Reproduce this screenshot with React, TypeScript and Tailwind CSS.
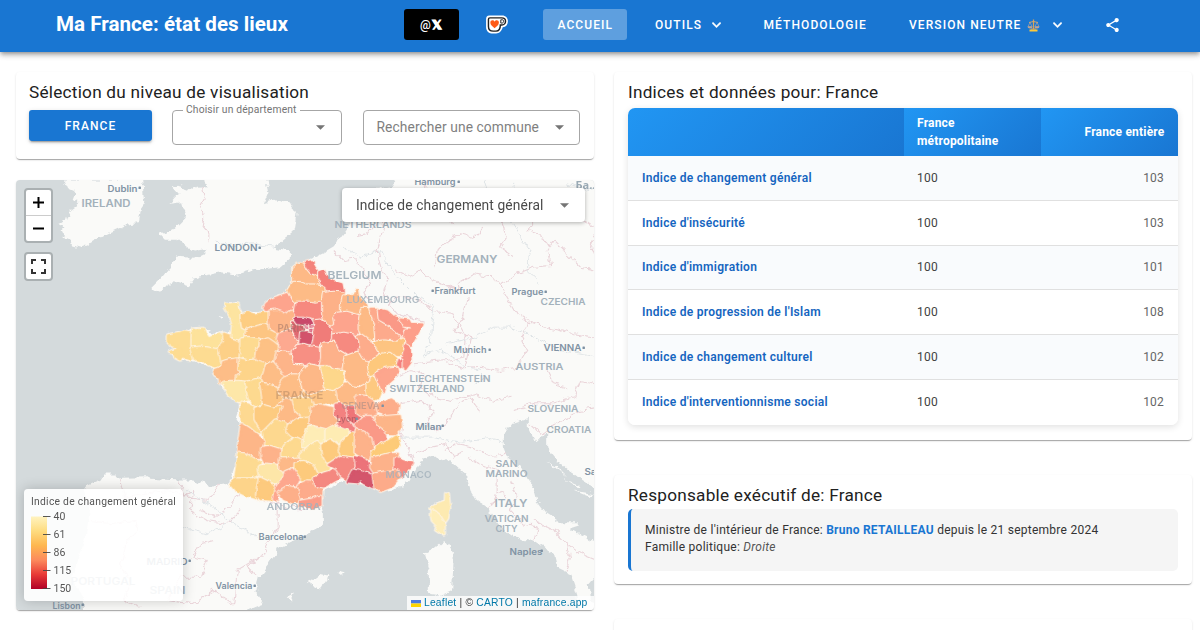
import React from "react";

type Shape = [string, string];

const NW: Shape[] = [
  ["#fddc92", "22,240 40,236 60,232 72,228 92,232 97,245 95,262 98,276 90,282 93,298 100,308 85,310 65,302 58,312 45,305 42,293 28,290 45,283 60,280 50,272 35,270 30,262 22,258"],
  ["#fde29b", "97,222 128,220 132,232 145,250 165,240 188,236 194,250 192,262 180,268 178,280 165,283 140,278 120,276 105,282 96,272"],
  ["#fddc92", "93,280 120,277 140,279 165,284 182,283 184,300 184,325 180,340 160,332 145,325 130,318 112,315 100,308"],
  ["#fdd087", "190,235 205,240 218,240 240,246 242,275 240,300 232,312 215,312 195,315 186,322 182,300 178,285 182,268 194,262"],
  ["#fde4a0", "196,144 208,148 222,144 232,144 232,158 240,172 245,190 243,200 258,212 256,225 262,235 250,248 230,248 215,243 216,225 218,205 212,185 203,168 197,158"],
  ["#fdcd82", "243,178 262,172 282,178 305,174 326,168 330,190 328,208 310,212 285,215 262,222 248,215 244,195"],
  ["#fdc582", "262,222 285,216 310,210 325,215 330,225 345,230 352,240 362,262 352,272 340,262 322,252 300,258 290,250 265,247 258,240"],
  ["#fdda90", "243,252 265,248 290,252 302,255 298,270 290,280 290,300 285,315 262,318 240,310 242,290"],
  ["#fdc185", "302,258 322,252 340,264 352,274 350,295 345,310 330,320 318,328 300,320 285,315 288,300 290,283 300,270"],
  ["#fda48d", "312,156 318,145 335,132 360,122 385,114 402,108 410,125 408,150 404,168 385,172 372,180 355,170 335,165 315,163"],
  ["#fdb588", "328,168 345,166 360,172 374,180 388,170 405,168 402,185 397,198 392,212 380,225 365,232 355,235 345,225 332,218 328,200"],
  ["#fda990", "357,236 375,230 390,226 398,240 412,252 422,265 415,285 395,295 375,292 358,284 360,268 352,250"],
  ["#fdbd87", "160,345 185,335 188,320 205,315 232,312 240,325 235,345 250,352 232,365 230,380 215,388 195,390 180,380 178,365 165,358"],
  ["#fdd48a", "238,312 262,318 285,316 310,325 318,332 312,355 300,375 275,378 245,385 230,380 232,365 248,352 237,340"],
  ["#fdbd86", "318,332 345,320 360,330 370,345 372,365 368,385 350,400 330,392 305,388 302,372 312,355"],
  ["#fdb489", "352,290 375,292 390,300 395,315 405,332 432,332 440,350 425,362 400,365 380,365 370,352 360,335 345,318"],
];

const NE: Shape[] = [
  ["#fdb986", "8,38 20,28 42,22 50,40 62,52 78,58 88,75 98,92 90,95 70,90 40,88 25,82 8,90"],
  ["#f4847b", "43,22 65,17 70,32 80,48 78,54 62,50 52,38"],
  ["#f4807a", "86,50 100,45 106,62 120,76 153,86 157,106 130,108 105,108 98,92 87,70"],
  ["#fdbb86", "-6,105 0,95 10,82 30,83 45,90 70,90 90,95 98,95 100,115 98,140 75,145 50,140 25,142 8,132"],
  ["#f6897f", "18,142 50,142 75,145 97,140 97,160 92,175 97,195 75,193 50,190 22,188 14,165"],
  ["#fdb188", "100,115 130,112 160,115 160,130 152,155 150,175 135,180 130,200 118,215 105,195 98,170 98,140"],
  ["#fdb887", "160,122 180,124 192,120 200,104 203,125 228,150 225,160 215,160 205,182 175,178 155,170 155,145"],
  ["#fda48d", "140,175 170,172 205,182 207,200 208,225 195,240 160,235 140,245 120,238 118,220 135,205 132,188"],
  ["#fdba85", "210,185 215,160 240,162 250,185 255,215 255,245 235,255 215,240 208,220 208,200"],
  ["#fdaa8c", "240,160 262,160 265,190 280,195 300,205 322,225 338,250 320,262 280,260 258,258 257,235 255,210 248,185"],
  ["#fa9987", "265,162 290,168 310,185 330,190 335,205 325,212 345,220 342,245 330,235 310,218 285,200 268,190"],
  ["#fd9f8a", "330,192 355,195 360,205 396,207 380,235 365,260 358,278 342,268 340,245 345,225 362,225 365,212 340,210"],
  ["#f99083", "340,268 358,280 360,320 345,340 332,330 332,312 335,290"],
  ["#f4807e", "318,312 330,315 330,335 318,328"],
  ["#fdc481", "250,262 280,258 320,262 338,252 335,280 330,298 300,298 275,295 255,280"],
  ["#fdac8b", "200,245 215,240 235,255 245,270 260,295 250,320 235,325 215,315 205,300 195,280"],
  ["#f68a80", "125,240 160,235 185,240 200,262 198,285 175,298 150,298 130,285 118,262"],
  ["#f07c79", "66,198 90,195 105,205 118,225 118,248 105,262 85,265 80,280 65,278 62,250 65,220"],
  ["#e06871", "5,200 20,203 35,210 38,225 30,250 20,245 10,225"],
  ["#d2536c", "32,232 50,230 65,234 60,262 45,266 30,262"],
  ["#c94a6b", "12,190 40,190 60,195 65,204 45,205 20,202"],
  ["#f78f83", "10,290 20,272 40,268 60,275 85,280 98,290 90,310 85,335 65,332 45,325 12,318 8,300"],
  ["#fdb18a", "95,265 130,262 140,285 165,300 165,320 155,350 130,345 110,335 90,332 95,310"],
  ["#fdba86", "165,305 200,292 210,310 235,325 240,345 232,375 205,388 185,385 165,365 160,340"],
  ["#fdc87c", "235,325 255,310 270,298 300,295 318,310 312,330 290,338 260,350 240,358"],
  ["#fda68d", "255,355 285,340 320,337 323,350 308,370 285,390 280,410 268,385"],
  ["#fdd78b", "88,335 110,335 130,345 158,350 155,385 130,400 100,395 95,370"],
  ["#fdb887", "40,340 60,330 85,335 92,370 97,397 75,408 55,412 40,400 30,365"],
];

const INNER_PARIS: Shape[] = [
  ["#e5889c", "43,209 53,210 51,220 43,219"],
  ["#e27f95", "56,209 67,209 67,217 57,217"],
  ["#d96b84", "53,221 66,220 65,230 54,228"],
];

const SW: Shape[] = [
  ["#fde7a8", "7,22 25,20 55,20 75,22 82,40 88,70 60,78 45,73 24,55"],
  ["#fdd98f", "78,22 118,12 122,20 125,50 130,90 115,95 98,92 88,70 82,45"],
  ["#fdc481", "122,25 140,28 150,32 175,45 195,70 180,95 155,100 130,92 128,60"],
  ["#fdbd86", "178,32 190,10 215,0 240,0 248,20 245,50 245,70 215,72 195,68 178,50"],
  ["#fdc486", "250,45 275,50 305,40 350,44 358,75 345,85 320,78 300,88 275,95 268,72 248,68"],
  ["#fdd088", "212,72 245,68 270,72 280,95 270,120 250,132 225,125 210,105"],
  ["#fdba86", "175,90 195,72 210,75 218,110 235,125 225,145 205,150 185,135 170,130"],
  ["#fdd991", "62,82 85,88 105,100 108,130 110,150 125,170 110,170 90,153 64,138 62,110"],
  ["#fdcb80", "105,100 130,92 155,100 180,95 165,125 155,155 130,168 115,150 105,130"],
  ["#fdd88f", "130,170 165,135 185,140 205,155 210,185 190,220 160,218 135,205"],
  ["#fdca7e", "205,150 230,132 262,130 275,150 265,175 245,190 215,180 200,165"],
  ["#fdb889", "275,95 300,90 345,100 350,130 340,160 310,160 290,150 270,140"],
  ["#fdb688", "64,147 85,160 110,180 128,195 125,225 115,250 100,250 75,235 54,230 57,190"],
  ["#fdb28a", "125,218 150,215 182,225 182,245 165,268 135,265 125,245"],
  ["#fdd98f", "185,230 200,205 225,188 250,200 248,225 235,250 205,252 185,245"],
  ["#feedb6", "255,180 265,155 290,158 318,165 318,205 300,200 285,200 270,215 250,212"],
  ["#fde09b", "240,240 265,215 290,200 305,220 325,250 322,280 300,295 280,285 255,262 240,260"],
  ["#feecb3", "318,165 340,153 365,155 385,165 360,200 335,205 318,200"],
  ["#fdca7d", "305,210 330,195 350,210 360,240 340,260 320,258 308,235"],
  ["#fdda91", "54,235 75,238 100,252 120,260 118,300 90,310 44,312 50,270"],
  ["#fde6a8", "115,275 135,268 165,270 180,285 192,300 180,320 155,320 130,315 118,300"],
  ["#fdb988", "178,252 205,252 235,250 230,265 210,275 195,290 180,278"],
  ["#fdca7c", "225,265 250,260 275,270 290,300 272,315 245,315 225,295"],
  ["#fda78e", "195,290 215,282 235,310 225,332 195,345 175,345 170,372 157,368 160,345 175,325 190,310"],
  ["#fdd48a", "30,325 44,312 90,312 118,308 120,340 108,368 75,358 45,343"],
  ["#fdca7e", "118,310 135,318 160,330 155,345 150,372 120,370 110,358"],
  ["#fdaf89", "175,350 200,335 230,340 245,362 240,378 215,380 190,370"],
  ["#fdab8b", "235,330 260,318 300,322 306,345 303,368 270,370 245,370 240,350"],
  ["#fb9d89", "240,379 270,374 300,364 300,388 275,397 250,388 237,393"],
  ["#f48880", "280,310 300,298 325,290 345,278 370,290 355,308 310,333 285,328"],
];

const SE: Shape[] = [
  ["#fdca7d", "65,200 100,165 108,190 105,230 95,250 65,240 58,225"],
  ["#f38180", "45,88 78,85 80,115 105,140 100,165 75,155 55,150 60,130 45,115"],
  ["#ee7478", "80,90 100,85 110,115 125,130 105,145 85,130"],
  ["#fdba86", "50,40 75,22 110,10 140,22 138,55 115,60 110,85 80,85 58,75"],
  ["#fdc980", "140,0 170,5 185,40 175,65 150,80 142,50"],
  ["#fdae8b", "110,62 135,65 160,80 172,95 165,120 130,125 110,110"],
  ["#fdad8a", "170,88 213,72 233,87 230,115 205,120 175,110"],
  ["#fdb588", "165,125 200,125 238,122 241,155 223,176 190,175 170,150"],
  ["#fa9987", "105,150 130,125 150,125 165,150 190,170 198,200 165,210 150,185 125,165"],
  ["#fdb28a", "108,165 130,172 150,190 155,220 145,250 120,240 105,230"],
  ["#fdcb78", "155,235 170,215 200,200 230,182 236,210 200,235 170,250 155,248"],
  ["#f48880", "25,268 60,245 100,250 108,280 80,312 62,300 50,280"],
  ["#ec737a", "105,245 130,252 150,270 158,298 135,292 110,280"],
  ["#d4566c", "82,318 100,282 130,290 160,305 160,336 130,323 122,312 112,320"],
  ["#fdb28a", "155,250 200,238 232,235 225,262 230,285 200,285 165,295 152,275"],
  ["#f68b81", "225,250 250,258 276,264 260,285 240,306 225,290"],
  ["#fdab8a", "160,298 200,290 230,288 236,305 213,333 180,346 164,336"],
  ["#fdeab1", "332,400 350,387 376,378 377,354 382,354 386,395 380,428 370,442 355,420 337,408"],
  ["#feeeba", "337,405 355,420 370,445 370,477 347,463 352,450 337,435 334,420"],
];

const LAND = [
  "190,27 200,50 225,62 215,90 240,95 205,125 210,135 175,160 195,170 180,185 200,195 185,205 210,210 215,225 240,232 265,222 320,190 380,162 412,158 418,120 432,100 425,27",
  "610,0 620,50 590,52 570,58 530,45 515,48 535,70 510,100 545,95 555,130 545,150 515,180 478,192 490,205 530,205 560,230 590,240 620,235 605,255 575,262 525,258 515,285 480,325 450,355 475,368 495,345 520,332 565,348 585,320 660,305 710,312 750,300 840,290 868,265 868,240 820,232 880,180 888,130 870,100 820,88 790,98 805,60 790,0",
  "1200,0 1180,45 1130,55 1100,100 1070,130 1045,165 1020,200 1000,230 975,245 940,262 880,285 878,335 865,365 800,395 790,418 805,425 727,430 715,410 712,398 675,398 685,430 695,455 700,480 670,495 610,478 575,480 505,500 505,520 530,530 510,545 530,565 580,570 660,600 640,610 665,650 720,700 705,745 720,760 710,860 690,935 640,945 580,930 530,930 450,925 440,920 370,922 350,925 345,912 310,912 300,928 260,945 250,960 270,1010 255,1100 215,1230 250,1280 250,1350 720,1350 740,1320 790,1300 765,1260 775,1220 830,1150 830,1135 880,1110 905,1100 970,1065 970,1020 960,990 965,960 1030,930 1070,940 1120,950 1150,962 1210,950 1240,910 1260,870 1300,855 1360,880 1395,910 1410,960 1425,985 1460,1010 1480,1040 1520,1090 1560,1105 1605,1115 1660,1150 1670,1190 1710,1210 1730,1270 1745,1350 1800,1350 1800,1300 1768,1290 1765,1240 1800,1200 1800,1120 1735,1090 1705,1075 1735,1065 1735,1055 1680,1055 1640,1030 1610,990 1600,950 1570,910 1560,890 1520,860 1510,830 1510,790 1520,765 1550,755 1585,745 1585,775 1605,815 1640,780 1640,830 1680,880 1730,920 1800,965 1800,0",
  "1270,1150 1300,1135 1330,1110 1360,1150 1355,1260 1320,1275 1285,1270 1285,1200",
  "925,1235 960,1210 985,1215 960,1255",
  "1010,1202 1035,1208 1030,1218",
  "862,1280 880,1272 872,1290",
  "652,437 668,440 660,444",
  "1640,870 1670,890 1700,920 1680,905",
  "1690,925 1740,945 1730,950",
  "1720,960 1780,972 1770,980",
];

const BORDERS = [
  "605,50 612,80 600,105 610,140 605,165 628,190 628,215",
  "1000,240 1030,270 1070,265 1090,300 1110,340 1090,370 1115,400",
  "1070,195 1100,190 1120,165 1155,140 1150,100 1180,80 1170,55",
  "1155,145 1145,190 1130,240 1140,290 1165,330 1150,360 1165,400 1190,430 1270,455",
  "1165,400 1190,380 1250,385 1300,420 1360,430 1395,490 1390,560 1340,570 1280,575 1240,580",
  "1190,300 1230,320 1260,300 1300,330 1340,345 1375,360 1370,340 1420,310 1480,320 1500,345",
  "1300,290 1310,240 1340,210 1380,190 1420,200 1450,170",
  "1500,345 1550,310 1600,290 1650,285 1640,240 1660,210 1700,250 1740,290 1790,300",
  "1500,345 1520,380 1550,430 1590,455 1650,475 1720,490 1790,500",
  "1400,380 1390,440 1360,480 1410,500 1400,560 1390,590",
  "1590,455 1560,500 1580,540 1550,590 1500,600 1440,590 1390,595 1340,580",
  "1590,100 1600,150 1580,180 1630,200 1650,230",
  "1500,150 1520,200 1500,230 1540,260",
  "1700,80 1720,130 1790,180 1770,230 1790,260",
  "1280,27 1270,60 1300,90 1340,100 1330,140 1360,160",
  "1150,600 1190,620 1230,600 1270,610 1260,650 1300,680 1350,690 1420,670 1480,690 1530,680",
  "1195,740 1210,760 1200,800 1230,850 1240,880",
  "1200,700 1260,690 1300,720 1280,760 1310,780 1340,760 1370,700 1410,680 1440,720",
  "1330,840 1370,820 1420,830 1480,860 1520,850",
  "1250,850 1290,830 1340,820 1360,860 1390,840",
  "1400,860 1440,880 1490,900 1490,960 1520,980",
  "1490,960 1480,1000 1460,1010",
  "1530,930 1550,980 1530,1020 1570,1060 1610,1070 1600,1110",
  "1600,1050 1660,1080 1700,1120 1710,1160 1700,1200",
  "1700,1120 1740,1150 1790,1170",
  "1540,720 1600,700 1660,700 1720,680 1740,630 1790,640",
  "1590,760 1620,790 1680,750 1740,720 1790,710",
  "1640,600 1660,640 1700,650",
  "360,925 375,980 420,970 500,960 560,970 580,960",
  "530,930 560,980 620,990 660,940",
  "580,960 570,1020 620,1050 680,1060 720,1020",
  "700,950 760,980 830,1000 900,1020 960,1000",
  "720,960 690,1010 640,1040 600,1020",
  "830,1010 830,1070 780,1160 740,1190 770,1215",
  "640,1110 600,1120 580,1160 620,1170 600,1220 540,1220",
  "540,1220 500,1290 580,1300 640,1260 700,1300 710,1200 780,1160",
  "380,1110 360,1180 390,1240 370,1290 420,1310",
  "270,1050 330,1060 400,1050 420,1080 380,1110",
];

const RIVERS = [
  "1025,230 1080,260 1140,240 1160,280 1200,330 1240,370 1300,410 1290,500 1270,560",
  "1270,550 1320,540 1360,560 1390,590",
  "1340,520 1420,500 1480,470 1540,470 1600,500 1680,540 1790,560",
  "1450,27 1470,90 1530,150 1590,240 1580,300 1620,340",
  "1180,90 1240,80 1320,70 1370,60",
  "1200,800 1290,800 1380,815 1460,805 1510,815",
  "1400,590 1440,600 1460,620 1420,640",
  "560,960 640,1010 700,1060 770,1100",
  "540,1070 620,1090 680,1060",
  "650,215 700,225 760,220 820,230",
  "1700,40 1750,60 1790,50",
  "1530,80 1540,40",
];

type LabelProps = { x: number; y: number; w: number; s?: number; c?: string; t: string; o?: number };
const COUNTRY = "#a3b1bb";
const CITY = "#8193a4";

const LABELS: LabelProps[] = [
  { x: 107, y: 191, w: 30, s: 9, c: CITY, t: "Dublin" },
  { x: 81, y: 206, w: 49, s: 10, t: "IRELAND" },
  { x: 214, y: 250, w: 43, s: 9.5, c: CITY, t: "LONDON" },
  { x: 414, y: 184, w: 41, s: 9, c: CITY, t: "Hamburg" },
  { x: 334, y: 227, w: 77, s: 9.5, t: "NETHERLANDS" },
  { x: 436, y: 262, w: 61, s: 11, t: "GERMANY" },
  { x: 434, y: 293, w: 41, s: 9, c: CITY, t: "Frankfurt" },
  { x: 511, y: 294, w: 32, s: 9, c: CITY, t: "Prague" },
  { x: 540, y: 304, w: 45, s: 9.5, t: "CZECHIA" },
  { x: 453, y: 352, w: 33, s: 9, c: CITY, t: "Munich" },
  { x: 543, y: 350, w: 38, s: 9.5, c: CITY, t: "VIENNA" },
  { x: 515, y: 369, w: 48, s: 9.5, t: "AUSTRIA" },
  { x: 409, y: 381.5, w: 81, s: 9.5, t: "LIECHTENSTEIN" },
  { x: 389, y: 391, w: 75, s: 9.5, t: "SWITZERLAND" },
  { x: 527, y: 411, w: 51, s: 9.5, t: "SLOVENIA" },
  { x: 546, y: 432, w: 45, s: 9.5, t: "CROATIA" },
  { x: 415, y: 429, w: 26, s: 9, c: CITY, t: "Milan" },
  { x: 495, y: 466, w: 22, s: 9.5, t: "SAN" },
  { x: 485, y: 476, w: 42, s: 9.5, t: "MARINO" },
  { x: 494, y: 506, w: 33, s: 11, t: "ITALY" },
  { x: 484, y: 521, w: 44, s: 9.5, t: "VATICAN" },
  { x: 495, y: 531, w: 22, s: 9.5, t: "CITY" },
  { x: 509, y: 554, w: 33, s: 9, c: CITY, t: "Naples" },
  { x: 258, y: 539, w: 45, s: 9, c: CITY, t: "Barcelona" },
  { x: 215, y: 588, w: 37, s: 9, c: CITY, t: "Valencia" },
  { x: 146, y: 564, w: 41, s: 9.5, c: CITY, t: "MADRID" },
  { x: 149, y: 593, w: 36, s: 10, t: "SPAIN" },
  { x: 70, y: 584, w: 65, s: 10, t: "PORTUGAL" },
  { x: 52, y: 608, w: 28, s: 9, c: CITY, t: "Lisbon" },
  { x: 584, y: 474, w: 12, s: 9, c: CITY, t: "Sa" },
];

const OVERLAID: LabelProps[] = [
  { x: 277, y: 331, w: 28, s: 10, c: "#8c6a62", t: "PARIS", o: 0.45 },
  { x: 275, y: 398, w: 48, s: 11, c: "#b58a66", t: "FRANCE", o: 0.55 },
  { x: 341, y: 408, w: 38, s: 9.5, c: "#a08a86", t: "GENEVA", o: 0.55 },
  { x: 336, y: 421, w: 20, s: 9, c: "#8d4a55", t: "Lyon", o: 0.5 },
  { x: 327, y: 278, w: 54, s: 11, t: "BELGIUM", o: 0.95 },
  { x: 346, y: 302, w: 73, s: 9.5, t: "LUXEMBOURG", o: 0.85 },
  { x: 385, y: 477, w: 46, s: 9.5, t: "MONACO", o: 0.8 },
  { x: 266, y: 509, w: 54, s: 9.5, t: "ANDORRA", o: 0.85 },
];

const DOTS: [number, number][] = [
  [139, 187], [259, 247], [458, 181], [432, 290], [545, 291], [489, 349], [583, 347],
  [442, 425], [541, 550], [304, 536], [254, 585], [189, 560], [82, 604], [382, 405], [356, 418],
];

function MapLabel({ x, y, w, s = 9.5, c = COUNTRY, t, o = 1 }: LabelProps) {
  return (
    <text
      x={x}
      y={y}
      fontSize={s}
      fill={c}
      opacity={o}
      fontWeight={600}
      textLength={w}
      lengthAdjust="spacingAndGlyphs"
      fontFamily="Inter, 'Open Sans', sans-serif"
    >
      {t}
    </text>
  );
}

function Departments({ shapes, dx, dy, grow = 7 }: { shapes: Shape[]; dx: number; dy: number; grow?: number }) {
  return (
    <g transform={`translate(${dx} ${dy})`}>
      {shapes.map(([fill, points], i) => (
        <g key={i}>
          <polygon points={points} fill={fill} stroke="#fff6ea" strokeWidth={grow + 6} />
          <polygon points={points} fill={fill} stroke={fill} strokeWidth={grow} />
        </g>
      ))}
    </g>
  );
}

function EuropeMap() {
  return (
    <svg className="block h-full w-full" viewBox="15.5 179.5 578.5 430.5" preserveAspectRatio="none">
      <defs>
        <filter id="rough" x="0" y="0" width="1800" height="1350" filterUnits="userSpaceOnUse">
          <feTurbulence type="fractalNoise" baseFrequency="0.045" numOctaves="3" seed="4" result="n" />
          <feDisplacementMap in="SourceGraphic" in2="n" scale="22" xChannelSelector="R" yChannelSelector="G" />
        </filter>
        <filter id="ragged" x="0" y="0" width="1400" height="1000" filterUnits="userSpaceOnUse">
          <feTurbulence type="fractalNoise" baseFrequency="0.06" numOctaves="2" seed="9" result="n" />
          <feDisplacementMap in="SourceGraphic" in2="n" scale="11" xChannelSelector="R" yChannelSelector="G" />
        </filter>
      </defs>
      <rect x="15" y="179" width="580" height="432" fill="#d4dadc" />
      <g transform="translate(0 170) scale(.33333)">
        <g filter="url(#rough)">
          {LAND.map((p, i) => (
            <polygon key={i} points={p} fill="#fafaf8" />
          ))}
          {BORDERS.map((p, i) => (
            <polyline key={i} points={p} fill="none" stroke="#ead4d9" strokeWidth="3.2" />
          ))}
          {RIVERS.map((p, i) => (
            <polyline key={i} points={p} fill="none" stroke="#dae0e3" strokeWidth="2.5" />
          ))}
        </g>
      </g>
      {LABELS.map((l) => (
        <MapLabel key={l.t} {...l} />
      ))}
      <g transform="translate(160 255) scale(.33333)">
        <g filter="url(#ragged)" strokeLinejoin="round">
          <Departments shapes={NW} dx={0} dy={0} />
          <Departments shapes={SW} dx={180} dy={360} />
          <Departments shapes={SE} dx={480} dy={360} />
          <Departments shapes={NE} dx={390} dy={0} />
          <Departments shapes={INNER_PARIS} dx={390} dy={0} grow={1} />
        </g>
      </g>
      {OVERLAID.map((l) => (
        <MapLabel key={l.t} {...l} />
      ))}
      {DOTS.map(([x, y]) => (
        <rect key={`${x}-${y}`} x={x - 1} y={y - 1} width="2.4" height="2.4" rx=".5" fill="#7d90a2" />
      ))}
      <text x="575" y="188" fontSize="11" fontWeight="700" fill="#9aaab5" fontFamily="'Open Sans', sans-serif">
        Ба..
      </text>
    </svg>
  );
}

function Caret() {
  return (
    <svg className="h-[5px] w-[9px] shrink-0" viewBox="0 0 10 5">
      <path d="M0 0h10L5 5z" fill="#757575" />
    </svg>
  );
}

function Chevron() {
  return (
    <svg className="h-[6px] w-[9px]" viewBox="0 0 12 7.4" fill="#fff">
      <path d="M1.4 0 6 4.6 10.6 0 12 1.4l-6 6-6-6z" stroke="#fff" strokeWidth=".6" />
    </svg>
  );
}

function CupIcon() {
  return (
    <svg className="h-[19px] w-[22px]" viewBox="0 0 46 40">
      <path d="M7 1h27c7 0 12 5 12 12s-4 12-11 13c-2 8-7 13-14 13h-6C6 39 0 34 0 25V9c0-5 2-8 7-8z" fill="#fff" />
      <path d="M8 6h25c5 0 8 3 8 7s-3 8-8 8h-3c0 9-4 13-9 13h-6c-6 0-10-4-10-10V9c0-2 1-3 3-3z" fill="#fff" stroke="#202020" strokeWidth="3" />
      <path d="M31 10h2c3 0 4 1 4 3s-1 4-4 4h-2z" fill="#fff" stroke="#202020" strokeWidth="2" />
      <path d="M18 28c-5-4-9-7-9-12 0-6 7-6 9-2 2-4 9-4 9 2 0 5-4 8-9 12z" fill="#ff5a16" />
    </svg>
  );
}

function ScalesIcon() {
  return (
    <svg className="h-[13px] w-[13px]" viewBox="0 0 26 26">
      <path d="M13 1v19" stroke="#d9a35a" strokeWidth="2.5" />
      <path d="M4 7c3 0 6-2 9-2s6 2 9 2" stroke="#d9a86a" strokeWidth="2" fill="none" />
      <path d="M6 7 2 15h8zM20 7l-4 8h8z" stroke="#b9a8a0" strokeWidth="1.2" fill="none" />
      <path d="M1 15h10c0 5-10 5-10 0zM15 15h10c0 5-10 5-10 0z" fill="#c4a590" />
      <path d="M8 19h10v2H8z" fill="#e0a050" />
      <path d="M5 21h16v4H5z" fill="#fdc93a" />
    </svg>
  );
}

function ShareIcon() {
  return (
    <svg className="h-[14px] w-[13px]" viewBox="3 2 18 20" fill="#fff">
      <path d="M18 16.080c-.76 0-1.440.3-1.960.77L8.910 12.700c.05-.23.09-.46.09-.7s-.04-.47-.09-.7l7.050-4.110c.54.5 1.250.81 2.040.81 1.660 0 3-1.340 3-3s-1.340-3-3-3-3 1.340-3 3c0 .24.04.47.09.7L8.040 9.810C7.500 9.310 6.790 9 6 9c-1.660 0-3 1.340-3 3s1.340 3 3 3c.79 0 1.500-.31 2.040-.81l7.120 4.160c-.05.21-.08.43-.08.65 0 1.610 1.310 2.920 2.920 2.920s2.920-1.310 2.920-2.920-1.310-2.920-2.920-2.920z" />
    </svg>
  );
}

const CARD = "rounded-[4px] bg-white shadow-[0_2px_1px_-1px_rgba(0,0,0,0.2),0_1px_1px_rgba(0,0,0,0.14),0_1px_3px_rgba(0,0,0,0.08)]";
const TITLE = "whitespace-nowrap text-[17.2px] leading-[27px] tracking-[0.24px] text-[#212121]";

const ROWS: [string, string, string][] = [
  ["Indice de changement général", "100", "103"],
  ["Indice d'insécurité", "100", "103"],
  ["Indice d'immigration", "100", "101"],
  ["Indice de progression de l'Islam", "100", "108"],
  ["Indice de changement culturel", "100", "102"],
  ["Indice d'interventionnisme social", "100", "102"],
];

function Header() {
  return (
    <header className="z-10 flex h-[51.5px] shrink-0 items-start bg-[#1976d2] pt-[8.5px] text-[12px] font-medium tracking-[1.08px] text-white shadow-[0_2px_4px_-1px_rgba(0,0,0,0.3),0_4px_5px_rgba(0,0,0,0.14),0_1px_8px_rgba(0,0,0,0.12)]">
      <h1 className="ml-14 w-[348px] shrink-0 whitespace-nowrap text-[20.6px] font-bold leading-[31px] tracking-[0.02px]">Ma France: état des lieux</h1>
      <a className="flex h-[31px] w-[55px] shrink-0 items-center justify-center rounded-[3px] bg-black pt-px text-[12px]">@<b className="[-webkit-text-stroke:0.9px_white]">𝕏</b></a>
      <div className="ml-[27px] flex h-[31px] w-[23px] shrink-0 items-center"><CupIcon /></div>
      <a className="ml-[33.5px] flex h-[31px] w-[84.5px] shrink-0 items-center justify-center rounded-[3px] bg-white/30 pl-px pt-px">ACCUEIL</a>
      <a className="ml-[28px] flex h-[31px] w-[108.5px] shrink-0 items-center gap-[10px] pt-px">OUTILS <Chevron /></a>
      <a className="flex h-[31px] w-[145.5px] shrink-0 items-center pt-px">MÉTHODOLOGIE</a>
      <a className="flex h-[32px] w-[197px] shrink-0 items-center pt-px">
        <span className="whitespace-nowrap">VERSION NEUTRE</span>
        <span className="ml-[6px]"><ScalesIcon /></span>
        <span className="ml-[13px]"><Chevron /></span>
      </a>
      <span className="flex h-[31px] items-center pt-px"><ShareIcon /></span>
    </header>
  );
}

export default function App() {
  return (
    <div className="flex h-[630px] w-[1200px] flex-col overflow-hidden bg-white font-['Roboto',sans-serif] text-[#212121]">
      <Header />
      <main className="flex items-start gap-5 pl-[15.5px] pt-[20.5px]">
        <div className="flex w-[578.5px] flex-col gap-[21px]">
          <section className={`${CARD} h-[86.5px] px-[13.5px] pt-[7px]`}>
            <h2 className={TITLE}>Sélection du niveau de visualisation</h2>
            <div className="flex pt-[4px]">
              <button className="h-[31px] w-[123px] rounded-[3px] bg-[#1976d2] text-[12px] font-medium tracking-[1.07px] text-white shadow-[0_3px_1px_-2px_rgba(0,0,0,0.2),0_2px_2px_rgba(0,0,0,0.14),0_1px_5px_rgba(0,0,0,0.12)]">FRANCE</button>
              <div className="relative ml-5 flex h-[35px] w-[170px] items-center justify-end rounded-[4px] border border-[#a6a6a6] pr-4">
                <span className="absolute left-[10px] top-[-8px] whitespace-nowrap bg-white px-[3px] text-[10.3px] leading-[14px] tracking-[0.15px] text-[#757575]">Choisir un département</span>
                <Caret />
              </div>
              <div className="ml-[20.5px] flex h-[35px] w-[217.5px] items-center justify-between rounded-[4px] border border-[#a6a6a6] pl-[13px] pr-[15px]">
                <span className="whitespace-nowrap text-[13.8px] tracking-[0.09px] text-[#7f7f7f]">Rechercher une commune</span>
                <Caret />
              </div>
            </div>
          </section>

          <section className={`${CARD} relative h-[430.5px] overflow-hidden`}>
            <EuropeMap />
            <div className="absolute left-[8.5px] top-[8.5px] flex w-[29px] flex-col rounded-[4px] border-2 border-[#aab0b2] bg-white">
              <span className="flex h-[26px] items-center justify-center border-b border-[#ccc]">
                <svg className="size-[11px]" viewBox="0 0 11 11"><path d="M5.5 0v11M0 5.5h11" stroke="#000" strokeWidth="2" /></svg>
              </span>
              <span className="flex h-[25px] items-center justify-center">
                <svg className="size-[11px]" viewBox="0 0 11 11"><path d="M0 5.5h11" stroke="#000" strokeWidth="2" /></svg>
              </span>
            </div>
            <div className="absolute left-[8.5px] top-[72.5px] flex size-[29px] items-center justify-center rounded-[4px] border-2 border-[#aab0b2] bg-white">
              <svg className="size-[15px]" viewBox="0 0 15 15" fill="none" stroke="#333" strokeWidth="2"><path d="M1 5V1h4M10 1h4v4M14 10v4h-4M5 14H1v-4" /></svg>
            </div>
            <div className="absolute left-[326.5px] top-[8.5px] flex h-[34px] w-[243px] items-center justify-between rounded-[4px] bg-white pl-[14px] pr-4 shadow-[0_1px_4px_rgba(0,0,0,0.3)]">
              <span className="whitespace-nowrap text-[13.8px] tracking-[0.12px] text-[#4a4a4a]">Indice de changement général</span>
              <Caret />
            </div>
            <div className="absolute left-[8.5px] top-[309.5px] h-[112px] w-[159px] rounded-[4px] bg-white/90 px-[7px] pt-[6px] shadow-[0_0_13px_rgba(0,0,0,0.2)]">
              <p className="whitespace-nowrap text-[10.3px] leading-[14px] tracking-[0.27px] text-[#555]">Indice de changement général</p>
              <svg className="mt-1 h-[82px] w-[60px] overflow-visible" viewBox="0 0 60 82">
                <defs>
                  <linearGradient id="scale" x1="0" x2="0" y1="0" y2="1">
                    <stop offset="0" stopColor="#fff3bf" />
                    <stop offset=".2" stopColor="#fedc80" />
                    <stop offset=".4" stopColor="#feb750" />
                    <stop offset=".6" stopColor="#fc8a5d" />
                    <stop offset=".8" stopColor="#e83a37" />
                    <stop offset="1" stopColor="#b00026" />
                  </linearGradient>
                </defs>
                <rect x="0" y="3.5" width="16" height="72.5" fill="url(#scale)" />
                {["40", "61", "86", "115", "150"].map((t, i) => (
                  <g key={t}>
                    <path d={`M12 ${3.5 + i * 18}h7.5`} stroke="#444" strokeWidth=".9" />
                    <text x="22.5" y={7.2 + i * 18} fontSize="10.5" fill="#555" fontFamily="Roboto, sans-serif">{t}</text>
                  </g>
                ))}
              </svg>
            </div>
            <div className="absolute bottom-0 right-0 flex h-[14px] w-[187px] items-center whitespace-nowrap bg-white/80 pl-[4px] font-['Liberation_Sans',sans-serif] text-[10.3px] tracking-[0.21px] text-[#333]">
              <svg className="mr-[3px] h-[7px] w-[10px]" viewBox="0 0 10 7"><path d="M0 0h10v3.500H0z" fill="#4c7be1" /><path d="M0 3.500h10V7H0z" fill="#ffd500" /></svg>
              <span><span className="text-[#0078a8]">Leaflet</span> | © <span className="text-[#0078a8]">CARTO</span> | <span className="text-[#0078a8]">mafrance.app</span></span>
            </div>
          </section>
        </div>

        <div className="flex w-[578px] flex-col">
          <section className={`${CARD} h-[367.5px] px-[14px] pt-[7px]`}>
            <h2 className={TITLE}>Indices et données pour: France</h2>
            <div className="mt-[2px] overflow-hidden rounded-[7px] text-[12px] shadow-[0_2px_7px_rgba(0,0,0,0.12)]">
              <div className="grid h-12 grid-cols-[275.5px_137px_1fr] items-stretch font-bold tracking-[0.2px] text-white">
                <div className="bg-[linear-gradient(135deg,#2196f3,#1976d2)]" />
                <div className="flex items-center bg-[linear-gradient(135deg,#2196f3,#1976d2)] px-[13.5px] leading-[18px]">France métropolitaine</div>
                <div className="flex items-center justify-end bg-[linear-gradient(135deg,#2196f3,#1976d2)] px-[13.5px]">France entière</div>
              </div>
              {ROWS.map(([name, a, b], i) => (
                <div key={name} className={`grid h-[44.8px] grid-cols-[275.5px_137px_1fr] items-center border-b border-[#e0e0e0] last:border-0 ${i % 2 ? "bg-white" : "bg-[#f9fbfd]"} ${i === 5 ? "bg-[#f8fafc]" : ""}`}>
                  <span className="whitespace-nowrap pl-[14px] font-semibold tracking-[0.28px] text-[#1565c0]">{name}</span>
                  <span className="pl-[13.5px] tracking-[0.2px] text-[#424242]">{a}</span>
                  <span className="pr-[14px] text-right tracking-[0.2px] text-[#666]">{b}</span>
                </div>
              ))}
            </div>
          </section>

          <section className={`${CARD} mt-[35px] h-[109.5px] px-[14px] pt-[7px]`}>
            <h2 className={TITLE}>Responsable exécutif de: France</h2>
            <div className="h-[62px] rounded-[5px] border-l-[3px] border-[#1976d2] bg-[#f5f5f5] pl-[14px] pt-[13px] text-[12px] leading-[17px] tracking-[0.25px] text-[#333]">
              <p className="whitespace-nowrap">Ministre de l'intérieur de France: <b className="text-[#1976d2]">Bruno RETAILLEAU</b> depuis le 21 septembre 2024</p>
              <p>Famille politique: <i className="text-[#555]">Droite</i></p>
            </div>
          </section>
          <section className={`${CARD} mt-[35px] h-[60px]`} />
        </div>
      </main>
    </div>
  );
}
